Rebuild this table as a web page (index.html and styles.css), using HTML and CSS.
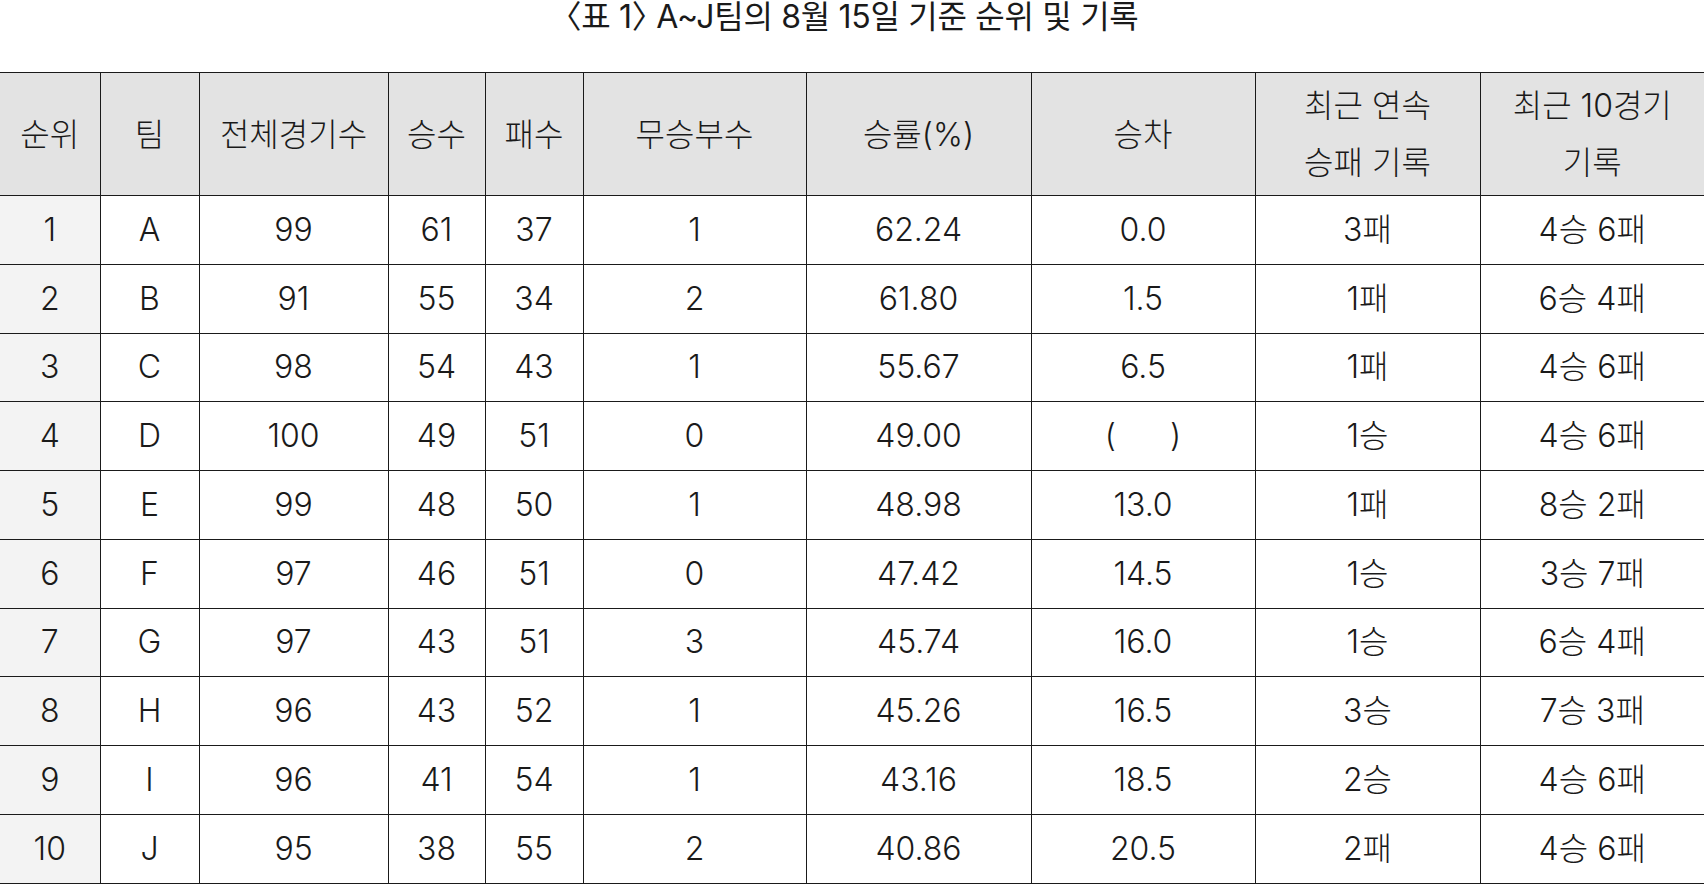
FILE: index.html
```html
<!DOCTYPE html>
<html lang="ko">
<head>
<meta charset="utf-8">
<title>〈표 1〉 A~J팀의 8월 15일 기준 순위 및 기록</title>
<link rel="stylesheet" href="styles.css">
</head>
<body>
<h1 class="caption">〈표 1〉 A~J팀의 8월 15일 기준 순위 및 기록</h1>
<table class="standings">
  <colgroup>
    <col class="c-rank">
    <col class="c-team">
    <col class="c-games">
    <col class="c-win">
    <col class="c-loss">
    <col class="c-draw">
    <col class="c-pct">
    <col class="c-gb">
    <col class="c-streak">
    <col class="c-last">
  </colgroup>
  <thead>
    <tr>
      <th>순위</th>
      <th>팀</th>
      <th>전체경기수</th>
      <th>승수</th>
      <th>패수</th>
      <th>무승부수</th>
      <th>승률(%)</th>
      <th>승차</th>
      <th>최근 연속<br>승패 기록</th>
      <th>최근 10경기<br>기록</th>
    </tr>
  </thead>
  <tbody>
    <tr><td class="rank">1</td><td>A</td><td>99</td><td>61</td><td>37</td><td>1</td><td>62.24</td><td>0.0</td><td>3패</td><td>4승 6패</td></tr>
    <tr><td class="rank">2</td><td>B</td><td>91</td><td>55</td><td>34</td><td>2</td><td>61.80</td><td>1.5</td><td>1패</td><td>6승 4패</td></tr>
    <tr><td class="rank">3</td><td>C</td><td>98</td><td>54</td><td>43</td><td>1</td><td>55.67</td><td>6.5</td><td>1패</td><td>4승 6패</td></tr>
    <tr><td class="rank">4</td><td>D</td><td>100</td><td>49</td><td>51</td><td>0</td><td>49.00</td><td><span class="blank">(<span class="gap"></span>)</span></td><td>1승</td><td>4승 6패</td></tr>
    <tr><td class="rank">5</td><td>E</td><td>99</td><td>48</td><td>50</td><td>1</td><td>48.98</td><td>13.0</td><td>1패</td><td>8승 2패</td></tr>
    <tr><td class="rank">6</td><td>F</td><td>97</td><td>46</td><td>51</td><td>0</td><td>47.42</td><td>14.5</td><td>1승</td><td>3승 7패</td></tr>
    <tr><td class="rank">7</td><td>G</td><td>97</td><td>43</td><td>51</td><td>3</td><td>45.74</td><td>16.0</td><td>1승</td><td>6승 4패</td></tr>
    <tr><td class="rank">8</td><td>H</td><td>96</td><td>43</td><td>52</td><td>1</td><td>45.26</td><td>16.5</td><td>3승</td><td>7승 3패</td></tr>
    <tr><td class="rank">9</td><td>I</td><td>96</td><td>41</td><td>54</td><td>1</td><td>43.16</td><td>18.5</td><td>2승</td><td>4승 6패</td></tr>
    <tr><td class="rank">10</td><td>J</td><td>95</td><td>38</td><td>55</td><td>2</td><td>40.86</td><td>20.5</td><td>2패</td><td>4승 6패</td></tr>
  </tbody>
</table>
</body>
</html>
```
FILE: styles.css
```css
html, body {
  margin: 0;
  padding: 0;
  background: #ffffff;
}

body {
  width: 1704px;
  height: 884px;
  overflow: hidden;
  font-family: Inter, "Noto Sans CJK KR", sans-serif;
  color: #1a1a1a;
}

.caption {
  margin: 0;
  height: 72px;
  box-sizing: border-box;
  font-size: 32px;
  line-height: 34px;
  font-weight: 400;
  text-align: center;
  letter-spacing: -0.3px;
  font-feature-settings: "halt";
}

.standings {
  width: 1704px;
  border-collapse: collapse;
  table-layout: fixed;
  font-size: 32px;
  font-weight: 300;
}

.c-rank { width: 100px; }
.c-team { width: 99px; }
.c-games { width: 189px; }
.c-win { width: 97px; }
.c-loss { width: 98px; }
.c-draw { width: 223px; }
.c-pct { width: 225px; }
.c-gb { width: 224px; }
.c-streak { width: 225px; }
.c-last { width: 224px; }

.standings th,
.standings td {
  border: 1px solid #1a1a1a;
  padding: 0;
  text-align: center;
  vertical-align: middle;
}

.standings tr > :first-child { border-left: none; }
.standings tr > :last-child { border-right: none; }

.standings th {
  background: #e3e3e3;
  font-weight: 300;
  height: 122px;
  line-height: 57px;
}

.standings td {
  height: 67.75px;
  line-height: 40px;
}

.standings td.rank {
  background: #f3f3f3;
}

.blank {
  display: inline-flex;
  align-items: center;
}

.gap {
  display: inline-block;
  width: 54px;
}
```
